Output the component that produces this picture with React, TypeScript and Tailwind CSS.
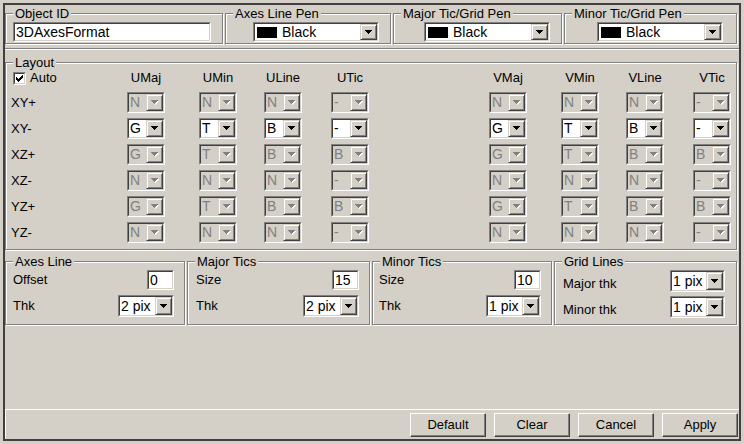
import type { ReactNode } from "react";

type Row = { label: string; values: string[]; enabled: boolean };

const COLS = [
  { head: "UMaj", ml: "" },
  { head: "UMin", ml: "ml-[34px]" },
  { head: "ULine", ml: "ml-[27px]" },
  { head: "UTic", ml: "ml-[29px]" },
  { head: "VMaj", ml: "ml-[120px]" },
  { head: "VMin", ml: "ml-[34px]" },
  { head: "VLine", ml: "ml-[27px]" },
  { head: "VTic", ml: "ml-[29px]" },
];

const ROWS: Row[] = [
  { label: "XY+", values: ["N", "N", "N", "-", "N", "N", "N", "-"], enabled: false },
  { label: "XY-", values: ["G", "T", "B", "-", "G", "T", "B", "-"], enabled: true },
  { label: "XZ+", values: ["G", "T", "B", "B", "G", "T", "B", "B"], enabled: false },
  { label: "XZ-", values: ["N", "N", "N", "-", "N", "N", "N", "-"], enabled: false },
  { label: "YZ+", values: ["G", "T", "B", "B", "G", "T", "B", "B"], enabled: false },
  { label: "YZ-", values: ["N", "N", "N", "-", "N", "N", "N", "-"], enabled: false },
];

// down arrow of a classic combo button, 7x4 pixels
function Arrow({ disabled = false }: { disabled?: boolean }) {
  const lines = [
    [0, 7],
    [1, 5],
    [2, 3],
    [3, 1],
  ];
  return (
    <svg width="8" height="5" viewBox="0 0 8 5" shapeRendering="crispEdges">
      {disabled &&
        lines.map(([x, w], i) => (
          <rect key={"w" + i} x={x + 1} y={i + 1} width={w} height={1} fill="#fff" />
        ))}
      {lines.map(([x, w], i) => (
        <rect key={i} x={x} y={i} width={w} height={1} fill={disabled ? "#808080" : "#000"} />
      ))}
    </svg>
  );
}

function Sunken({
  className = "",
  inner = "",
  children,
}: {
  className?: string;
  inner?: string;
  children?: ReactNode;
}) {
  return (
    <div className={`border border-t-[#808080] border-l-[#808080] border-b-white border-r-white ${className}`}>
      <div
        className={`flex h-full border border-t-[#404040] border-l-[#404040] border-b-[#d4d0c8] border-r-[#d4d0c8] ${inner}`}
      >
        {children}
      </div>
    </div>
  );
}

function DropBtn({ disabled = false, className = "" }: { disabled?: boolean; className?: string }) {
  return (
    <div
      className={`flex shrink-0 items-center justify-center bg-[#d4d0c8] border border-t-[#d4d0c8] border-l-[#d4d0c8] border-b-[#404040] border-r-[#404040] shadow-[inset_1px_1px_0_#fff,inset_-1px_-1px_0_#808080] ${className}`}
    >
      <Arrow disabled={disabled} />
    </div>
  );
}

function Combo({
  className,
  value,
  disabled = false,
  swatch = false,
  pad = "pl-[1px]",
}: {
  className: string;
  value: string;
  disabled?: boolean;
  swatch?: boolean;
  pad?: string;
}) {
  return (
    <Sunken className={className} inner={disabled ? "bg-[#d4d0c8]" : "bg-white"}>
      <div
        className={`flex min-w-0 flex-1 items-center whitespace-nowrap ${pad} ${
          disabled ? "text-[#808080]" : "text-black"
        }`}
      >
        {swatch && <span className="mr-[5px] h-[11px] w-[20px] shrink-0 bg-black" />}
        {value}
      </div>
      <DropBtn disabled={disabled} className="w-[17px]" />
    </Sunken>
  );
}

function Group({
  title,
  className = "",
  children,
}: {
  title: string;
  className?: string;
  children?: ReactNode;
}) {
  return (
    <fieldset
      className={`border border-[#808080] shadow-[inset_1px_1px_0_#fff,1px_1px_0_#fff] ${className}`}
    >
      <legend className="ml-[7px] bg-[#d4d0c8] px-[2px] leading-[15px]">{title}</legend>
      {children}
    </fieldset>
  );
}

function CheckBox() {
  const starts = [2, 3, 4, 3, 2, 1, 0];
  return (
    <Sunken className="h-[13px] w-[13px] shrink-0" inner="items-center justify-center bg-white">
      <svg width="7" height="7" viewBox="0 0 7 7" shapeRendering="crispEdges">
        {starts.map((y, x) => (
          <rect key={x} x={x} y={y} width={1} height={3} fill="#000" />
        ))}
      </svg>
    </Sunken>
  );
}

function Field({ value, className }: { value: string; className: string }) {
  return (
    <Sunken className={className} inner="items-center bg-white pl-[1px]">
      {value}
    </Sunken>
  );
}

function Button({ label }: { label: string }) {
  return (
    <div className="flex h-[24px] w-[76px] items-center justify-center border border-t-white border-l-white border-b-[#404040] border-r-[#404040] shadow-[inset_-1px_-1px_0_#808080]">
      {label}
    </div>
  );
}

export default function App() {
  return (
    <div className="h-[444px] w-[744px] bg-[#d4d0c8] pl-[3px] pt-[3px] font-['Liberation_Sans',Arial,sans-serif] text-[13px] text-black">
      <div className="flex h-[438px] w-[738px] flex-col border-2 border-[#404040]">
        {/* pens */}
        <div className="mt-[1px] flex gap-[2px]">
          <Group title="Object ID" className="w-[218px]">
            <div className="ml-[7px] pb-[1px] pt-[1px]">
              <Field value="3DAxesFormat" className="h-[20px] w-[198px] text-[14px]" />
            </div>
          </Group>
          <Group title="Axes Line Pen" className="w-[166px]">
            <div className="ml-[27px] pb-[1px] pt-[1px] text-[14px]">
              <Combo className="h-[20px] w-[126px]" value="Black" swatch pad="pl-[2px]" />
            </div>
          </Group>
          <Group title="Major Tic/Grid Pen" className="w-[169px]">
            <div className="ml-[30px] pb-[1px] pt-[1px] text-[14px]">
              <Combo className="h-[20px] w-[126px]" value="Black" swatch pad="pl-[2px]" />
            </div>
          </Group>
          <Group title="Minor Tic/Grid Pen" className="w-[173px]">
            <div className="ml-[32px] pb-[1px] pt-[1px] text-[14px]">
              <Combo className="h-[20px] w-[126px]" value="Black" swatch pad="pl-[2px]" />
            </div>
          </Group>
        </div>

        <div className="mt-[4px] h-[2px] border-b border-t border-b-white border-t-[#808080]" />

        {/* layout */}
        <Group title="Layout" className="mt-[5px] w-[732px] pb-[6px]">
          <div className="mt-[1px] flex h-[14px] items-center">
            <div className="flex w-[121px] items-center pl-[7px]">
              <CheckBox />
              <span className="ml-[4px]">Auto</span>
            </div>
            {COLS.map((c) => (
              <div key={c.head} className={`flex w-[38px] justify-center whitespace-nowrap ${c.ml}`}>
                {c.head}
              </div>
            ))}
          </div>
          <div className="mt-[7px] flex flex-col gap-[5px]">
            {ROWS.map((r) => (
              <div key={r.label} className="flex h-[21px] items-center">
                <div className="w-[121px] pl-[5px]">{r.label}</div>
                {r.values.map((v, i) => (
                  <Combo
                    key={i}
                    className={`h-[21px] w-[38px] text-[14px] ${COLS[i].ml}`}
                    value={v}
                    disabled={!r.enabled}
                    pad="pl-[1px]"
                  />
                ))}
              </div>
            ))}
          </div>
        </Group>

        {/* axes / tics / grid */}
        <div className="mt-[4px] flex gap-[2px]">
          <Group title="Axes Line" className="w-[180px]">
            <div className="pb-[7px] pl-[7px] pr-[10px] pt-[1px]">
              <div className="flex h-[20px] items-center justify-between">
                <span>Offset</span>
                <Field value="0" className="h-[20px] w-[27px] text-[14px]" />
              </div>
              <div className="mt-[5px] flex h-[22px] items-center justify-between">
                <span>Thk</span>
                <Combo className="h-[22px] w-[56px] text-[14px]" value="2 pix" />
              </div>
            </div>
          </Group>
          <Group title="Major Tics" className="w-[183px]">
            <div className="pb-[7px] pl-[8px] pr-[10px] pt-[1px]">
              <div className="flex h-[20px] items-center justify-between">
                <span>Size</span>
                <Field value="15" className="h-[20px] w-[27px] text-[14px]" />
              </div>
              <div className="mt-[5px] flex h-[22px] items-center justify-between">
                <span>Thk</span>
                <Combo className="h-[22px] w-[56px] text-[14px]" value="2 pix" />
              </div>
            </div>
          </Group>
          <Group title="Minor Tics" className="w-[180px]">
            <div className="pb-[7px] pl-[6px] pr-[10px] pt-[1px]">
              <div className="flex h-[20px] items-center justify-between">
                <span>Size</span>
                <Field value="10" className="h-[20px] w-[27px] text-[14px]" />
              </div>
              <div className="mt-[5px] flex h-[22px] items-center justify-between">
                <span>Thk</span>
                <Combo className="h-[22px] w-[55px] text-[14px]" value="1 pix" />
              </div>
            </div>
          </Group>
          <Group title="Grid Lines" className="w-[183px]">
            <div className="pb-[6px] pl-[8px] pr-[11px] pt-[1px]">
              <div className="flex h-[22px] justify-between">
                <span className="self-end leading-[16px]">Major thk</span>
                <Combo className="h-[22px] w-[55px] text-[14px]" value="1 pix" />
              </div>
              <div className="mt-[4px] flex h-[22px] justify-between">
                <span className="self-end leading-[16px]">Minor thk</span>
                <Combo className="h-[22px] w-[55px] text-[14px]" value="1 pix" />
              </div>
            </div>
          </Group>
        </div>

        {/* buttons */}
        <div className="mt-auto flex h-[30px] justify-end gap-[8px] border-l border-t border-l-white border-t-white pr-[1px] pt-[3px]">
          <Button label="Default" />
          <Button label="Clear" />
          <Button label="Cancel" />
          <Button label="Apply" />
        </div>
      </div>
    </div>
  );
}
